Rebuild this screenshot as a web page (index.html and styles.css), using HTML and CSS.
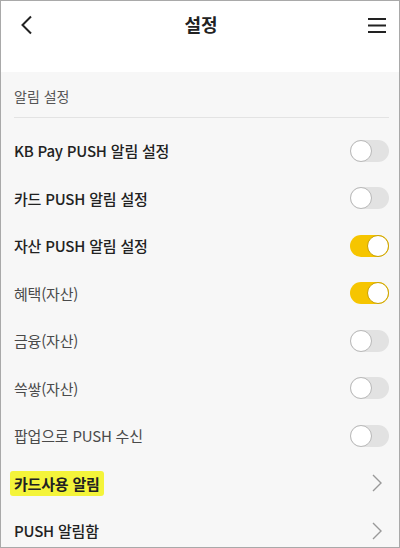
FILE: index.html
```html
<!DOCTYPE html>
<html lang="ko">
<head>
<meta charset="utf-8">
<link rel="stylesheet" href="styles.css">
</head>
<body>
<div class="screen">
  <header class="topbar">
    <svg class="back" width="14" height="20" viewBox="0 0 14 20"><path d="M11 1.5 L2.5 10 L11 18.5" fill="none" stroke="#222" stroke-width="2"/></svg>
    <h1 class="title">설정</h1>
    <svg class="menu" width="18" height="16" viewBox="0 0 18 16"><path d="M0 2h18M0 8.5h18M0 15h18" stroke="#222" stroke-width="2"/></svg>
  </header>
  <main class="content">
    <div class="section-title">알림 설정</div>
    <div class="divider"></div>
    <ul class="list">
      <li class="row strong"><span>KB Pay PUSH 알림 설정</span><span class="toggle"></span></li>
      <li class="row strong"><span>카드 PUSH 알림 설정</span><span class="toggle"></span></li>
      <li class="row strong"><span>자산 PUSH 알림 설정</span><span class="toggle on"></span></li>
      <li class="row light"><span>혜택(자산)</span><span class="toggle on"></span></li>
      <li class="row light"><span>금융(자산)</span><span class="toggle"></span></li>
      <li class="row light"><span>쓱쌓(자산)</span><span class="toggle"></span></li>
      <li class="row light"><span>팝업으로 PUSH 수신</span><span class="toggle"></span></li>
      <li class="row bold"><span class="mark">카드사용 알림</span><svg class="chev" width="10" height="18" viewBox="0 0 10 18"><path d="M1 1l8 8-8 8" fill="none" stroke="#999" stroke-width="1.4"/></svg></li>
      <li class="row strong"><span>PUSH 알림함</span><svg class="chev" width="10" height="18" viewBox="0 0 10 18"><path d="M1 1l8 8-8 8" fill="none" stroke="#999" stroke-width="1.4"/></svg></li>
    </ul>
  </main>
</div>
</body>
</html>
```

FILE: styles.css
```css
* { box-sizing: border-box; }
html, body { margin: 0; padding: 0; }
body {
  width: 400px;
  height: 548px;
  overflow: hidden;
  font-family: "Noto Sans CJK KR", "Noto Sans", sans-serif;
  color: #222;
}
.screen {
  width: 400px;
  height: 548px;
  border: 1px solid #a9a9a9;
  background: #f7f7f7;
  display: flex;
  flex-direction: column;
  overflow: hidden;
}
.topbar {
  height: 71px;
  flex: none;
  background: #fff;
  display: flex;
  align-items: flex-start;
  justify-content: space-between;
  padding: 14px 13px 0 19px;
}
.back { margin-top: 0; }
.title {
  margin: 0;
  font-size: 18px;
  font-weight: 700;
  line-height: 22px;
  margin-top: -2px;
  color: #222;
}
.menu { margin-top: 2px; }
.content {
  flex: 1;
  padding: 0 10px 0 13px;
}
.section-title {
  padding-top: 13px;
  font-size: 14px;
  line-height: 22px;
  color: #555;
}
.divider {
  height: 1px;
  background: #e3e3e3;
  margin-top: 10px;
}
.list {
  list-style: none;
  margin: 0;
  padding: 9px 0 0;
}
.row {
  height: 47.5px;
  display: flex;
  align-items: center;
  justify-content: space-between;
  font-size: 15px;
  letter-spacing: -0.2px;
}
.row.strong { font-weight: 500; color: #222; }
.row.bold { font-weight: 700; color: #222; }
.row.light { font-weight: 400; color: #4a4a4a; }
.mark {
  background: #f4f43a;
  margin-left: -4px;
  padding: 2px 4px 2px 4px;
  border-radius: 3px;
}
.toggle {
  width: 39px;
  height: 22px;
  border-radius: 11px;
  background: #e2e2e2;
  position: relative;
  flex: none;
}
.toggle::after {
  content: "";
  position: absolute;
  top: 0;
  left: 0;
  width: 22px;
  height: 22px;
  border-radius: 50%;
  background: #fff;
  border: 1.5px solid #b8b8b8;
  box-sizing: border-box;
}
.toggle.on { background: #f6c500; }
.toggle.on::after {
  left: 17px;
  border-color: #c9a100;
}
.chev { margin-right: 7px; }
```
